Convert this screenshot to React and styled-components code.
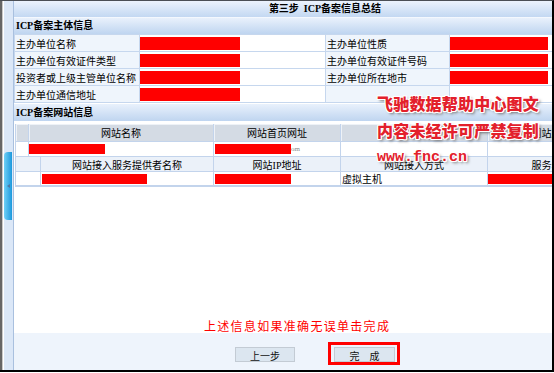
import React from "react";
import styled, { createGlobalStyle } from "styled-components";

const GlobalStyle = createGlobalStyle`
  html, body {
    margin: 0;
    padding: 0;
    background: #fff;
  }
  body {
    font-family: "Liberation Serif", "Noto Sans CJK SC", serif;
    color: #000;
  }
`;

const Frame = styled.div`
  position: relative;
  width: 554px;
  height: 372px;
  box-sizing: border-box;
  display: flex;
  border-top: 1px solid #4b4f55;
  border-right: 2px solid #000;
  border-bottom: 2px solid #000;
  overflow: hidden;
`;

const Rail = styled.div`
  flex: 0 0 14px;
  box-sizing: border-box;
  border-left: 2px solid #666;
  border-right: 1px solid #a9c0df;
  padding-left: 2px;
  background: linear-gradient(to right, #c8c8c8 0 1px, #fff 1px 2px, #dbe7f7 2px);
`;

const ScrollTab = styled.div`
  width: 8px;
  height: 68px;
  margin-top: 151px;
  border-radius: 4px 0 0 4px;
  background: linear-gradient(to right, #6fd0f6, #1b98dd);
  display: flex;
  align-items: center;
  justify-content: center;
`;

const Arrow = styled.div`
  width: 0;
  height: 0;
  border-top: 2.5px solid transparent;
  border-bottom: 2.5px solid transparent;
  border-right: 3px solid #4c7ba6;
`;

const Main = styled.div`
  flex: 1;
  min-width: 0;
  display: flex;
  flex-direction: column;
  overflow: hidden;
  background: #fff;
`;

const Sheet = styled.div`
  width: 622px;
  flex: 1;
  display: flex;
  flex-direction: column;
`;

const TitleBar = styled.div`
  height: 16px;
  line-height: 16px;
  text-align: center;
  font-size: 10px;
  font-weight: bold;
  background: linear-gradient(#ecf3fd, #c3d8f2);
  border-bottom: 1px solid #f4f8fe;
`;

const SectionHeader = styled.div`
  height: ${(p) => p.$h || 16}px;
  line-height: ${(p) => p.$h || 16}px;
  margin-top: ${(p) => p.$mt || 0}px;
  padding-left: 2px;
  font-size: 10px;
  font-weight: bold;
  background: linear-gradient(#e9f1fc, #bfd5f0);
`;

const InfoGrid = styled.div`
  display: grid;
  grid-template-columns: 124px 185px 123px 1fr;
  grid-auto-rows: 16px;
  gap: 1px;
  padding: 1px;
  background: #c6d7ee;
`;

const InfoCell = styled.div`
  display: flex;
  align-items: center;
  font-size: 10px;
  white-space: nowrap;
  overflow: hidden;
  padding-left: ${(p) => (p.$label ? 1 : 0)}px;
  background: ${(p) => (p.$label ? "#eff5fc" : "#fff")};
`;

const Redact = styled.span`
  display: inline-block;
  flex: none;
  width: ${(p) => p.$w}px;
  height: ${(p) => p.$h || 13}px;
  margin-left: ${(p) => p.$ml || 0}px;
  background: #ff0000;
`;

const Faint = styled.span`
  font-size: 7px;
  color: #8a8a8a;
`;

const SiteTable = styled.div`
  margin: 3px 0 0 1px;
`;

const SiteGrid = styled.div`
  display: grid;
  grid-template-columns: ${(p) => p.$cols};
  gap: 1px;
  padding: ${(p) => (p.$last ? "1px 1px 2px 1px" : "0 1px")};
  background: #c3d4ec;
`;

const SiteCell = styled.div`
  height: ${(p) => p.$h}px;
  display: flex;
  align-items: center;
  justify-content: ${(p) => (p.$kind === "data" ? "flex-start" : "center")};
  padding-left: ${(p) => (p.$kind === "data" ? 1 : 0)}px;
  font-size: 10px;
  white-space: nowrap;
  overflow: hidden;
  background: ${(p) =>
    p.$kind === "head" ? "#d4dbe4" : p.$kind === "sub" ? "#ebf1f9" : "#fff"};
  box-shadow: ${(p) => (p.$kind === "head" ? "inset 1px 1px 0 #eef2f7" : "none")};
`;

const Notice = styled.div`
  margin-top: auto;
  padding-left: 190px;
  line-height: 15px;
  font-size: 12px;
  letter-spacing: 1.3px;
  color: #ff0000;
  font-family: "Noto Sans CJK SC", sans-serif;
`;

const Footer = styled.div`
  height: 37px;
  flex: none;
  box-sizing: border-box;
  display: flex;
  align-items: flex-start;
  padding: 9px 0 0 221px;
  background: #eef4fc;
`;

const Button = styled.button`
  width: ${(p) => p.$w || 60}px;
  height: 15px;
  margin-top: ${(p) => p.$mt || 0}px;
  padding: 0;
  box-sizing: border-box;
  border: 1px solid #c3cbd4;
  background: #dce6f0;
  font-size: 10px;
  font-family: "Noto Sans CJK SC", sans-serif;
  color: #111;
  white-space: pre;
`;

const Highlight = styled.div`
  margin-left: 33px;
  border: 3px solid #ff0000;
  padding: 2px 2px 0 3px;
  display: flex;
`;

const Watermark = styled.div`
  position: absolute;
  left: 377px;
  top: 89px;
  pointer-events: none;
  color: #e3202b;
  font-weight: 900;
  text-shadow: 1px 0 0 #fff, -1px 0 0 #fff, 0 1px 0 #fff, 0 -1px 0 #fff,
    1px 1px 0 #fff, -1px -1px 0 #fff, 1px -1px 0 #fff, -1px 1px 0 #fff,
    2px 2px 3px #6b6b6b;
`;

const MarkLine = styled.div`
  height: 27px;
  line-height: 27px;
  font-size: ${(p) => (p.$mono ? 15 : 16)}px;
  letter-spacing: ${(p) => (p.$mono ? 0 : 0.2)}px;
  font-family: ${(p) =>
    p.$mono ? '"Liberation Mono", monospace' : '"Noto Sans CJK SC", sans-serif'};
  white-space: nowrap;
`;

const infoRows = [
  ["主办单位名称", 100, "主办单位性质", 98],
  ["主办单位有效证件类型", 100, "主办单位有效证件号码", 98],
  ["投资者或上级主管单位名称", 100, "主办单位所在地市", 98],
  ["主办单位通信地址", 100, "", 0],
];

const topCols = "12px 184px 126px 146px 1fr";
const subCols = "24px 172px 126px 146px 1fr";

export default function App() {
  return (
    <>
      <GlobalStyle />
      <Frame>
        <Rail>
          <ScrollTab>
            <Arrow />
          </ScrollTab>
        </Rail>
        <Main>
          <Sheet>
            <TitleBar>第三步&nbsp; ICP备案信息总结</TitleBar>
            <SectionHeader>ICP备案主体信息</SectionHeader>
            <InfoGrid>
              {infoRows.map(([l1, w1, l2, w2], i) => (
                <React.Fragment key={i}>
                  <InfoCell $label>{l1}</InfoCell>
                  <InfoCell>{w1 > 0 && <Redact $w={w1} />}</InfoCell>
                  <InfoCell $label>{l2}</InfoCell>
                  <InfoCell>{w2 > 0 && <Redact $w={w2} />}</InfoCell>
                </React.Fragment>
              ))}
            </InfoGrid>
            <SectionHeader $mt={1} $h={17}>ICP备案网站信息</SectionHeader>
            <SiteTable>
              <SiteGrid $cols={topCols}>
                <SiteCell $kind="head" $h={17} />
                <SiteCell $kind="head" $h={17}>网站名称</SiteCell>
                <SiteCell $kind="head" $h={17}>网站首页网址</SiteCell>
                <SiteCell $kind="head" $h={17}>网站负责人</SiteCell>
                <SiteCell $kind="head" $h={17}>网站服务内容</SiteCell>
                <SiteCell $kind="data" $h={14} />
                <SiteCell $kind="data" $h={14}>
                  <Redact $w={76} $h={10} $ml={-1} />
                </SiteCell>
                <SiteCell $kind="data" $h={14}>
                  <Redact $w={76} $h={10} />
                  <Faint>om</Faint>
                </SiteCell>
                <SiteCell $kind="data" $h={14} />
                <SiteCell $kind="data" $h={14} />
              </SiteGrid>
              <SiteGrid $cols={subCols} $last>
                <SiteCell $kind="sub" $h={14} />
                <SiteCell $kind="sub" $h={14}>网站接入服务提供者名称</SiteCell>
                <SiteCell $kind="sub" $h={14}>网站IP地址</SiteCell>
                <SiteCell $kind="sub" $h={14}>网站接入方式</SiteCell>
                <SiteCell $kind="sub" $h={14}>服务器放置地</SiteCell>
                <SiteCell $kind="data" $h={13} />
                <SiteCell $kind="data" $h={13}>
                  <Redact $w={105} $h={10} />
                </SiteCell>
                <SiteCell $kind="data" $h={13}>
                  <Redact $w={76} $h={10} />
                </SiteCell>
                <SiteCell $kind="data" $h={13}>虚拟主机</SiteCell>
                <SiteCell $kind="data" $h={13}>
                  <Redact $w={120} $h={10} $ml={-1} />
                </SiteCell>
              </SiteGrid>
            </SiteTable>
            <Notice>上述信息如果准确无误单击完成</Notice>
          </Sheet>
          <Footer>
            <Button $mt={5}>上一步</Button>
            <Highlight>
              <Button $w={61}>{"完\u3000成"}</Button>
            </Highlight>
          </Footer>
        </Main>
        <Watermark>
          <MarkLine>飞驰数据帮助中心图文</MarkLine>
          <MarkLine>内容未经许可严禁复制</MarkLine>
          <MarkLine $mono>www.fnc.cn</MarkLine>
        </Watermark>
      </Frame>
    </>
  );
}
